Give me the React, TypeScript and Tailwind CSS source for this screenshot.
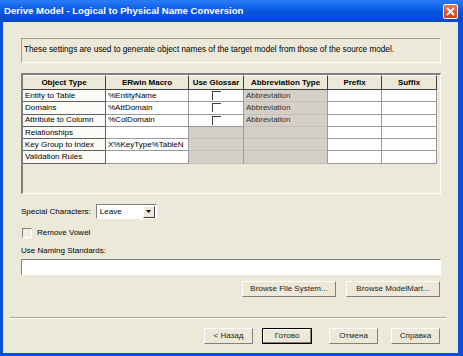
import React from 'react';

const rows = [
  { name: 'Entity to Table', macro: '%EntityName', glossary: true, abbr: 'Abbreviation' },
  { name: 'Domains', macro: '%AttDomain', glossary: true, abbr: 'Abbreviation' },
  { name: 'Attribute to Column', macro: '%ColDomain', glossary: true, abbr: 'Abbreviation' },
  { name: 'Relationships', macro: '', glossary: false, abbr: '' },
  { name: 'Key Group to Index', macro: 'X%KeyType%TableN', glossary: false, abbr: '' },
  { name: 'Validation Rules', macro: '', glossary: false, abbr: '' },
];

const headers = ['Object Type', 'ERwin Macro', 'Use Glossar', 'Abbreviation Type', 'Prefix', 'Suffix'];

// classic raised button
const Button: React.FC<{ label: string; width: string; isDefault?: boolean }> = ({ label, width, isDefault }) => (
  <div className={`${width} h-[16px] ${isDefault ? 'border border-[#000]' : ''}`}>
    <div className="h-full border-t border-l border-white border-r border-b border-r-[#808080] border-b-[#808080] bg-[#ece9d8] flex items-center justify-center text-[8px] text-[#222]">
      {label}
    </div>
  </div>
);

const SunkenBox: React.FC<{ className?: string; children?: React.ReactNode }> = ({ className, children }) => (
  <div className={`border-t border-l border-[#9d9b8f] border-r-white border-b-white border-r border-b ${className ?? ''}`}>
    {children}
  </div>
);

const CheckBox: React.FC<{ bg?: string }> = ({ bg = 'bg-white' }) => (
  <div className={`w-[9px] h-[9px] border-t border-l border-[#404040] ${bg}`} />
);

const App: React.FC = () => {
  return (
    <div className="w-[463px] h-[356px] flex flex-col bg-[#0a4fd8] font-['Liberation_Sans',Arial,sans-serif] overflow-hidden">
      {/* title bar */}
      <div className="h-[22px] shrink-0 flex items-center justify-between pl-[4px] pr-[5px] bg-gradient-to-b from-[#2a7cf6] via-[#0558e3] to-[#0a48c9]">
        <span className="text-white font-bold text-[9.6px]">Derive Model - Logical to Physical Name Conversion</span>
        <div className="w-[15px] h-[15px] rounded-[2px] border border-white bg-gradient-to-b from-[#e8774f] to-[#c8401c] flex items-center justify-center">
          <svg width="9" height="9" viewBox="0 0 9 9">
            <path d="M1.5 1.5 L7.5 7.5 M7.5 1.5 L1.5 7.5" stroke="white" strokeWidth="1.8" strokeLinecap="square" />
          </svg>
        </div>
      </div>

      {/* dialog body */}
      <div className="flex-1 ml-[3px] mr-[5px] mb-[3px] bg-[#ece9d8] flex flex-col pl-[18px] pr-[17px] text-[8px] text-black">
        <SunkenBox className="mt-[16px] h-[25px] px-[2px] pt-[5px] text-[8.2px]">
          These settings are used to generate object names of the target model from those of the source model.
        </SunkenBox>

        {/* grid */}
        <div className="mt-[10px] h-[121px] border-t-2 border-l-2 border-[#808080] border-r border-b border-r-white border-b-white">
          <div className="grid grid-cols-[83px_83px_55px_84px_54px_55px] w-[414px]">
            {headers.map((h) => (
              <div key={h} className="h-[15px] bg-[#ece9d8] border-r border-b border-[#404040] border-t border-t-white flex items-center justify-center font-bold">
                {h}
              </div>
            ))}
            {rows.map((r) => (
              <React.Fragment key={r.name}>
                <div className="h-[12.3px] bg-[#fbfbf8] border-r border-b border-[#606060] pl-[2px] flex items-center whitespace-nowrap overflow-hidden">{r.name}</div>
                <div className="h-[12.3px] bg-white border-r border-b border-[#9a9a9a] pl-[2px] flex items-center whitespace-nowrap overflow-hidden">{r.macro}</div>
                <div className={`h-[12.3px] border-r border-b border-[#9a9a9a] flex items-center justify-center ${r.glossary ? 'bg-white' : 'bg-[#d4d0c8] border-b-[#c4c0b8]'}`}>
                  {r.glossary && <CheckBox />}
                </div>
                <div className="h-[12.3px] bg-[#d4d0c8] border-r border-b border-[#9a9a9a] border-b-[#c4c0b8] pl-[2px] flex items-center text-[#303030]">{r.abbr}</div>
                <div className="h-[12.3px] bg-white border-r border-b border-[#9a9a9a]" />
                <div className="h-[12.3px] bg-white border-r border-b border-[#9a9a9a]" />
              </React.Fragment>
            ))}
          </div>
        </div>

        {/* special characters */}
        <div className="mt-[10px] flex items-center gap-[5px]">
          <span>Special Characters:</span>
          <div className="w-[61px] h-[15px] bg-white border-t border-l border-[#808080] border-r border-b border-r-white border-b-white flex items-center justify-between">
            <span className="pl-[3px]">Leave</span>
            <div className="w-[12px] h-[12px] mr-[1px] bg-[#ece9d8] border-t border-l border-white border-r border-b border-r-[#404040] border-b-[#404040] flex items-center justify-center">
              <svg width="5" height="3" viewBox="0 0 5 3"><path d="M0 0 H5 L2.5 3 Z" fill="black" /></svg>
            </div>
          </div>
        </div>

        <div className="mt-[8px] flex items-center gap-[5px] pl-[1px]">
          <div className="w-[10px] h-[10px] border-t border-l border-[#808080] border-r border-b border-r-white border-b-white bg-[#f0eee4]" />
          <span>Remove Vowel</span>
        </div>

        <div className="mt-[6px]">
          <span>Use Naming Standards:</span>
        </div>
        <div className="mt-[2px] h-[16px] bg-white border-t border-l border-[#808080] border-r border-b border-r-white border-b-white" />

        <div className="mt-[6px] flex justify-end gap-[10px] pr-[1px]">
          <Button label="Browse File System..." width="w-[94px]" />
          <Button label="Browse ModelMart..." width="w-[94px]" />
        </div>

        <div className="mt-[20px] -ml-[11px] -mr-[5px] border-t border-[#aca899] border-b border-b-white" />

        <div className="mt-[9px] flex justify-end items-center pr-[1px]">
          <Button label="< Назад" width="w-[49px]" />
          <div className="w-[9px]" />
          <Button label="Готово" width="w-[50px]" isDefault />
          <div className="w-[17px]" />
          <Button label="Отмена" width="w-[49px]" />
          <div className="w-[13px]" />
          <Button label="Справка" width="w-[49px]" />
        </div>
      </div>
    </div>
  );
};

export default App;
